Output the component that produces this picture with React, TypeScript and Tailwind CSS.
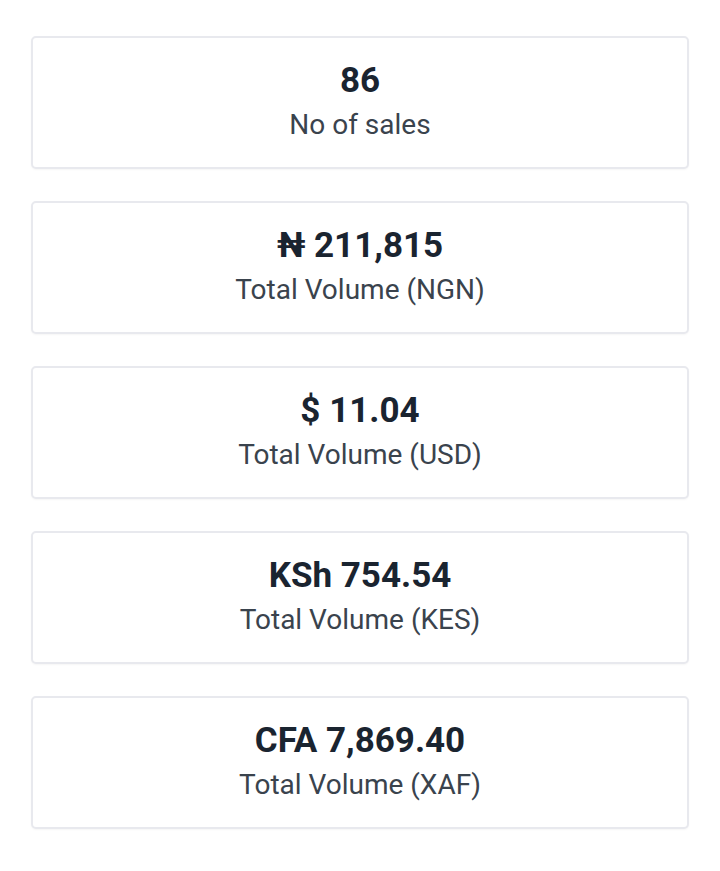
import React from "react";

const items = [
  { value: "86", label: "No of sales" },
  { value: "₦ 211,815", label: "Total Volume (NGN)" },
  { value: "$ 11.04", label: "Total Volume (USD)" },
  { value: "KSh 754.54", label: "Total Volume (KES)" },
  { value: "CFA 7,869.40", label: "Total Volume (XAF)" },
];

export default function App() {
  return (
    <div
      className="min-h-[871px] w-[720px] bg-white px-[31px] pt-[36px]"
      style={{ fontFamily: "Roboto, 'Noto Sans', sans-serif" }}
    >
      <div className="flex flex-col gap-[32px]">
        {items.map((it) => (
          <div
            key={it.label}
            className="flex h-[133px] flex-col items-center rounded-[5px] border-2 border-[#e8e9ee] bg-white pt-[22px] shadow-[0_1px_2px_rgba(0,0,0,0.04)]"
          >
            <div className="text-[35px] font-bold leading-[42px] text-[#1a2430]">{it.value}</div>
            <div className="mt-[6px] text-[28px] leading-[34px] text-[#3a434d]">{it.label}</div>
          </div>
        ))}
      </div>
    </div>
  );
}
